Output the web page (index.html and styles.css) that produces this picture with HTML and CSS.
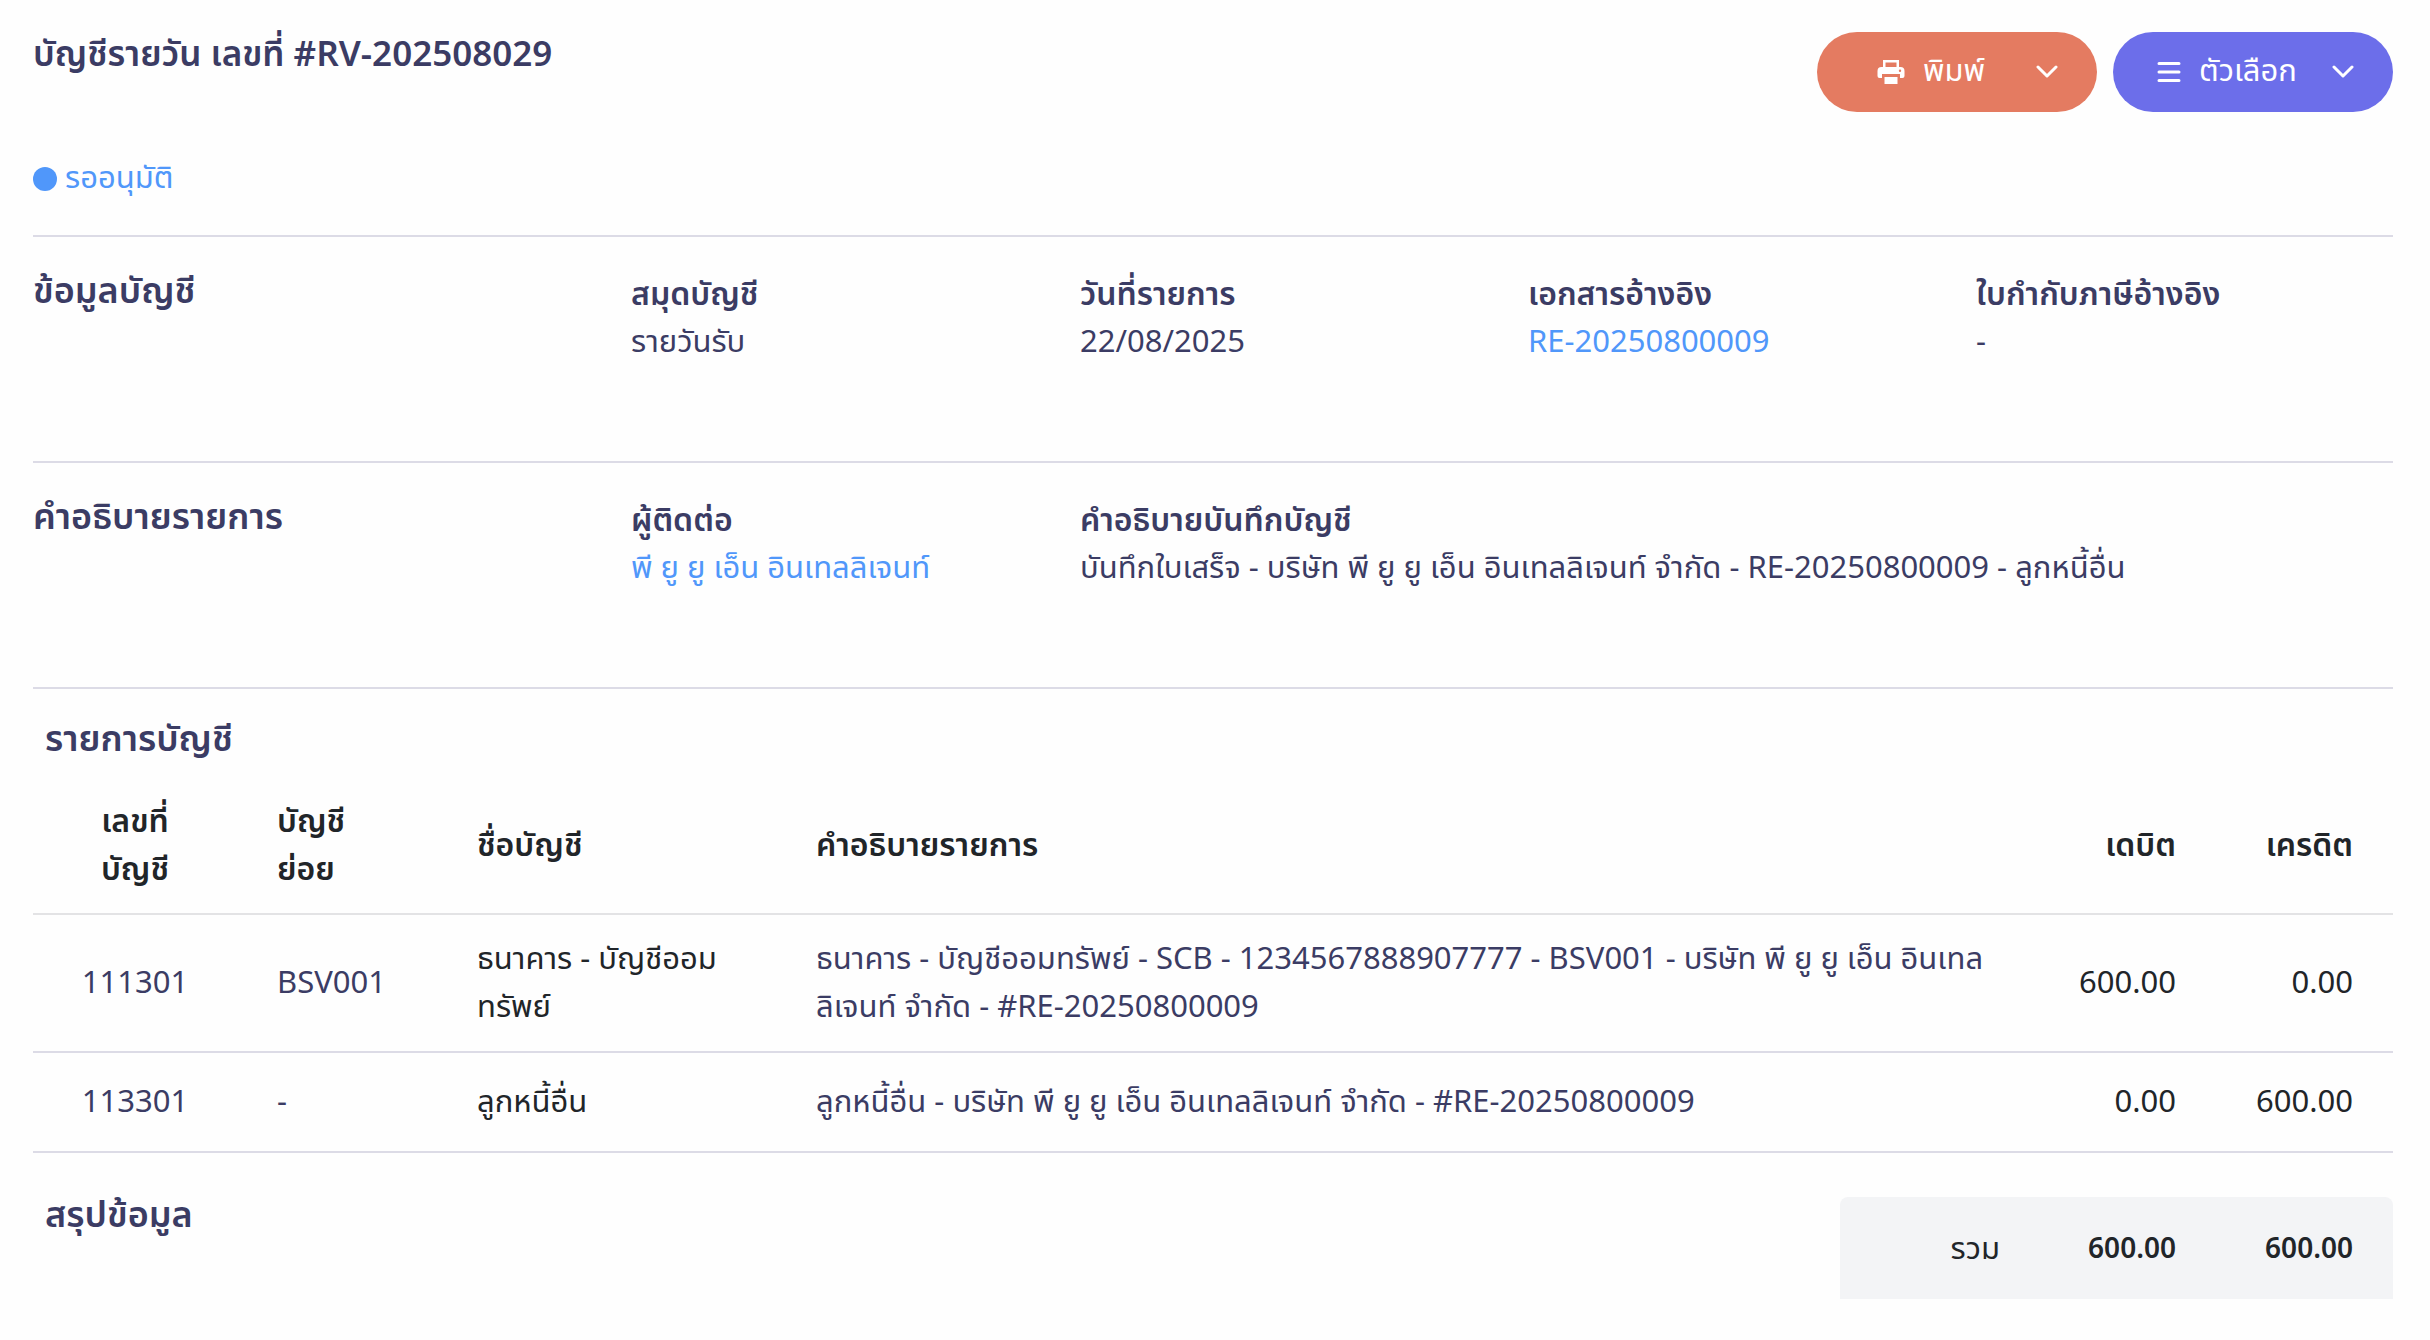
FILE: index.html
```html
<!DOCTYPE html>
<html lang="th">
<head>
<meta charset="utf-8">
<meta name="viewport" content="width=device-width, initial-scale=1">
<title>บัญชีรายวัน เลขที่ #RV-202508029</title>
<link rel="stylesheet" href="styles.css">
</head>
<body>
<main class="page">
  <header class="page-header">
    <h1 class="heading">บัญชีรายวัน เลขที่ #RV-202508029</h1>
    <div class="actions">
      <button type="button" class="btn btn-print">
        <svg class="icon-print" viewBox="0 0 28 24" aria-hidden="true"><path fill="currentColor" fill-rule="evenodd" d="M6 0h16v7h1.500a4 4 0 0 1 4 4v5a2 2 0 0 1-2 2H23v-4H5v4H2.500a2 2 0 0 1-2-2v-5a4 4 0 0 1 4-4H6zM8.500 2.500V7h11V2.500zM23 9.500a1.200 1.200 0 1 0 0 2.400 1.200 1.200 0 0 0 0-2.400zM7.500 17h13v7h-13z"/></svg>
        <span>พิมพ์</span>
        <svg class="icon-chevron" viewBox="0 0 22 14" aria-hidden="true"><path d="M2 2l9 9 9-9"/></svg>
      </button>
      <button type="button" class="btn btn-options">
        <svg class="icon-menu" viewBox="0 0 24 22" aria-hidden="true"><path d="M2 2.500h20M2 11h20M2 19.500h20"/></svg>
        <span>ตัวเลือก</span>
        <svg class="icon-chevron" viewBox="0 0 22 14" aria-hidden="true"><path d="M2 2l9 9 9-9"/></svg>
      </button>
    </div>
  </header>

  <p class="status"><span class="status-dot"></span>รออนุมัติ</p>

  <section class="info">
    <h2 class="heading">ข้อมูลบัญชี</h2>
    <dl class="field"><dt>สมุดบัญชี</dt><dd>รายวันรับ</dd></dl>
    <dl class="field"><dt>วันที่รายการ</dt><dd>22/08/2025</dd></dl>
    <dl class="field"><dt>เอกสารอ้างอิง</dt><dd><a href="#">RE-20250800009</a></dd></dl>
    <dl class="field"><dt>ใบกำกับภาษีอ้างอิง</dt><dd>-</dd></dl>
  </section>

  <section class="info">
    <h2 class="heading">คำอธิบายรายการ</h2>
    <dl class="field"><dt>ผู้ติดต่อ</dt><dd><a href="#">พี ยู ยู เอ็น อินเทลลิเจนท์</a></dd></dl>
    <dl class="field field-wide"><dt>คำอธิบายบันทึกบัญชี</dt><dd>บันทึกใบเสร็จ - บริษัท พี ยู ยู เอ็น อินเทลลิเจนท์ จำกัด - RE-20250800009 - ลูกหนี้อื่น</dd></dl>
  </section>

  <section class="entries">
    <h2 class="heading">รายการบัญชี</h2>
    <table class="ledger">
      <colgroup><col class="col-code"><col class="col-sub"><col class="col-name"><col class="col-desc"><col class="col-amount"><col class="col-amount"></colgroup>
      <thead>
        <tr><th class="center">เลขที่<br>บัญชี</th><th>บัญชี<br>ย่อย</th><th>ชื่อบัญชี</th><th>คำอธิบายรายการ</th><th class="right">เดบิต</th><th class="right">เครดิต</th></tr>
      </thead>
      <tbody>
        <tr><td class="center navy">111301</td><td class="navy">BSV001</td><td>ธนาคาร - บัญชีออม<br>ทรัพย์</td><td class="navy">ธนาคาร - บัญชีออมทรัพย์ - SCB - 1234567888907777 - BSV001 - บริษัท พี ยู ยู เอ็น อินเทล<br>ลิเจนท์ จำกัด - #RE-20250800009</td><td class="right">600.00</td><td class="right">0.00</td></tr>
        <tr><td class="center navy">113301</td><td class="navy">-</td><td>ลูกหนี้อื่น</td><td class="navy">ลูกหนี้อื่น - บริษัท พี ยู ยู เอ็น อินเทลลิเจนท์ จำกัด - #RE-20250800009</td><td class="right">0.00</td><td class="right">600.00</td></tr>
      </tbody>
    </table>
  </section>

  <section class="summary">
    <h2 class="heading">สรุปข้อมูล</h2>
    <dl class="totals"><dt>รวม</dt><dd>600.00</dd><dd>600.00</dd></dl>
  </section>
</main>
</body>
</html>
```
FILE: styles.css
```css
* { box-sizing: border-box; }

body {
  margin: 0;
  background: #fefefe;
  color: #212529;
  font-family: "Noto Sans Thai", "Noto Sans", sans-serif;
  font-size: 31px;
  font-weight: 400;
  line-height: 48px;
}

h1, h2, p, dl, dd { margin: 0; }

a { color: #5097fa; text-decoration: none; }

.page { padding: 32px 37px 40px 33px; }

.page-header {
  display: flex;
  justify-content: space-between;
  align-items: flex-start;
}

.heading {
  color: #3b3c64;
  font-size: 36px;
  font-weight: 600;
  line-height: 46px;
}

.page-header .heading { font-size: 35px; line-height: 48px; }

.actions { display: flex; gap: 16px; }

.btn {
  display: flex;
  align-items: center;
  justify-content: space-between;
  width: 280px;
  height: 80px;
  padding: 0 39px 0 44px;
  border: 0;
  border-radius: 40px;
  color: #fff;
  font: inherit;
}

.btn-print { background: #e47b61; padding-left: 60px; }
.btn-options { background: #6c6eea; }
.btn span { flex: 1; padding-left: 18px; text-align: left; }
.btn svg { flex: none; }

.icon-print { width: 28px; height: 24px; }
.icon-menu { width: 24px; height: 22px; }
.icon-chevron { width: 22px; height: 14px; }

.icon-menu, .icon-chevron {
  fill: none;
  stroke: currentColor;
  stroke-width: 3;
  stroke-linecap: round;
  stroke-linejoin: round;
}

.status {
  display: flex;
  align-items: center;
  gap: 8px;
  margin: 43px 0 32px;
  color: #5097fa;
}

.status-dot {
  width: 24px;
  height: 24px;
  border-radius: 50%;
  background: #5097fa;
}

.info {
  display: grid;
  grid-template-columns: 598fr 449fr 448fr 448fr 417fr;
  min-height: 226px;
  padding-top: 32px;
  border-top: 2px solid #dcdbe6;
  color: #3b3c64;
}

.field { padding-top: 3px; line-height: 47px; white-space: nowrap; }
.field dt { font-size: 32px; font-weight: 600; }
.field-wide { grid-column: span 3; }

.entries { border-top: 2px solid #dcdbe6; padding-top: 28px; }
.entries .heading { margin-bottom: 14px; }
.entries .heading, .summary .heading { padding-left: 12px; }

.ledger {
  width: 100%;
  border-collapse: collapse;
  table-layout: fixed;
}

.col-code { width: 204px; }
.col-sub { width: 200px; }
.col-name { width: 339px; }
.col-amount { width: 177px; }

.ledger th, .ledger td {
  height: 100px;
  padding: 21px 40px 19px;
  border-bottom: 2px solid #dcdbe6;
  text-align: left;
  vertical-align: middle;
  white-space: nowrap;
}

.ledger th { border-color: #e3e3e5; font-size: 32px; font-weight: 600; }
.ledger .center { text-align: center; }
.ledger .right { text-align: right; padding-left: 0; }
.ledger .navy { color: #3b3c64; }

.summary {
  display: flex;
  justify-content: space-between;
  align-items: flex-start;
  padding-top: 44px;
}

.summary .heading { line-height: 38px; }

.totals {
  display: grid;
  grid-template-columns: 160px 176px 177px;
  width: 553px;
  padding: 29px 40px 25px 0;
  border-radius: 8px 8px 0 0;
  background: #f3f4f6;
  text-align: right;
}

.totals dd { font-weight: 600; font-size: 28px; }
```
